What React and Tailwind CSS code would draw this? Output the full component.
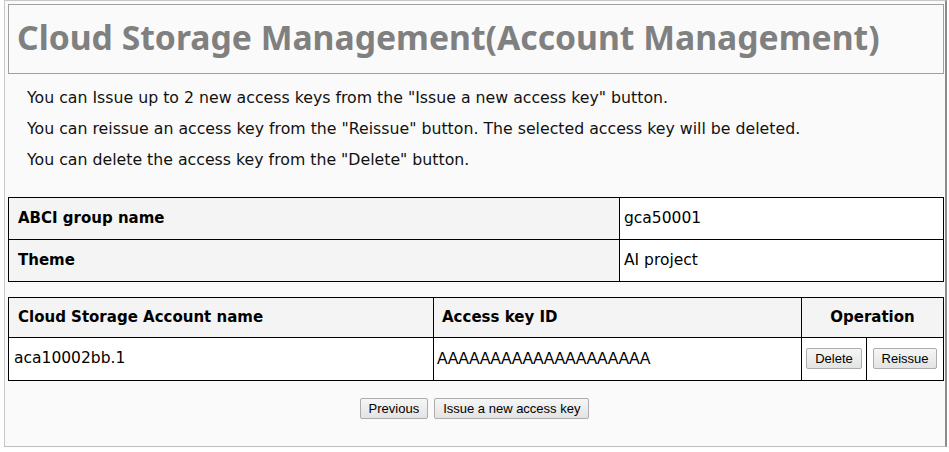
import React from "react";

const font = { fontFamily: '"DejaVu Sans", Verdana, sans-serif' };
const noto = { fontFamily: '"Noto Sans", "DejaVu Sans", sans-serif' };
const arial = { fontFamily: '"Liberation Sans", Arial, sans-serif' };

function Btn({ children }) {
  return (
    <button
      className="h-[21px] px-[8px] border border-[#adadad] rounded-[2px] bg-gradient-to-b from-[#f6f6f6] to-[#e3e3e3] text-[13px] leading-none text-black"
      style={arial}
    >
      {children}
    </button>
  );
}

export default function App() {
  return (
    <div className="w-[949px] h-[452px] bg-white overflow-hidden" style={font}>
      <div className="ml-[4px] w-[943px] h-[447px] border-l border-t border-[#c8c8c8] border-r-2 border-r-[#8c8c8c] border-b border-b-[#bdbdbd] bg-[#fafafa] pl-[3px] pt-[3px]">
        {/* title */}
        <div className="w-[936px] h-[70px] border border-[#a0a0a0] bg-[#fafafa] flex items-center pl-[8px] pb-[2px]">
          <h1 className="text-[33.7px] font-bold text-[#808080] leading-none whitespace-nowrap" style={noto}>
            Cloud Storage Management(Account Management)
          </h1>
        </div>

        {/* notes */}
        <div className="pl-[19px] pt-[8px] text-[15.75px] text-[#111] leading-[31px]">
          <p>You can Issue up to 2 new access keys from the "Issue a new access key" button.</p>
          <p>You can reissue an access key from the "Reissue" button. The selected access key will be deleted.</p>
          <p>You can delete the access key from the "Delete" button.</p>
        </div>

        {/* group info */}
        <table className="mt-[22px] w-[936px] border-collapse text-[15.5px] text-black">
          <tbody>
            <tr className="h-[42px]">
              <th className="w-[611px] border border-black bg-[#f4f4f4] text-left text-[15px] font-bold pl-[9px] pb-[1px]">
                ABCI group name
              </th>
              <td className="border border-black bg-white pl-[4px]">gca50001</td>
            </tr>
            <tr className="h-[42px]">
              <th className="border border-black bg-[#f4f4f4] text-left text-[15px] font-bold pl-[9px] pb-[1px]">
                Theme
              </th>
              <td className="border border-black bg-white pl-[4px]">AI project</td>
            </tr>
          </tbody>
        </table>

        {/* accounts */}
        <table className="mt-[15px] w-[936px] border-collapse text-[15.5px] text-black">
          <thead>
            <tr className="h-[40px]">
              <th className="w-[425px] border border-black bg-[#f4f4f4] text-left text-[15px] font-bold pl-[9px]">
                Cloud Storage Account name
              </th>
              <th className="w-[368px] border border-black bg-[#f4f4f4] text-left text-[15px] font-bold pl-[8px]">
                Access key ID
              </th>
              <th colSpan={2} className="border border-black bg-[#f4f4f4] text-center text-[15px] font-bold">
                Operation
              </th>
            </tr>
          </thead>
          <tbody>
            <tr className="h-[43px]">
              <td className="border border-black bg-white pl-[5px]">aca10002bb.1</td>
              <td className="border border-black bg-white pl-[3px] text-[16px]" style={arial}>
                AAAAAAAAAAAAAAAAAAAA
              </td>
              <td className="w-[65px] border border-black bg-white text-center">
                <Btn>Delete</Btn>
              </td>
              <td className="border border-black bg-white text-center">
                <Btn>Reissue</Btn>
              </td>
            </tr>
          </tbody>
        </table>

        <div className="flex justify-center gap-[6px] mt-[17px] pr-[4px]">
          <Btn>Previous</Btn>
          <Btn>Issue a new access key</Btn>
        </div>
      </div>
    </div>
  );
}
